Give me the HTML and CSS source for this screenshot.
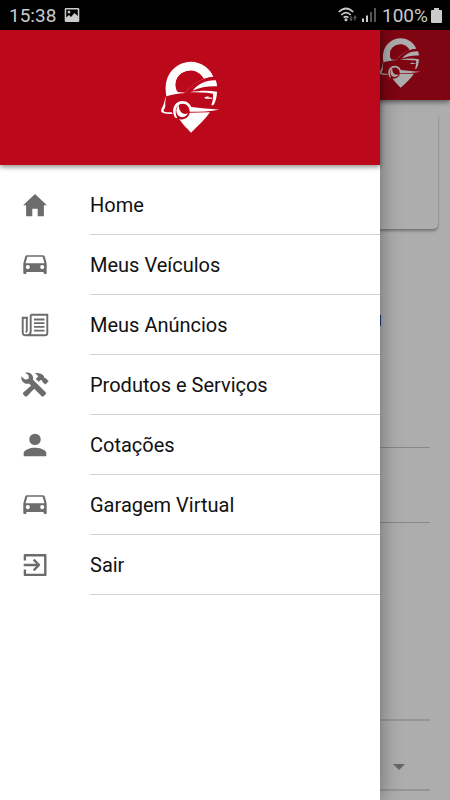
FILE: index.html
```html
<!DOCTYPE html>
<html lang="pt-BR">
<head>
    <meta charset="UTF-8">
    <meta name="viewport" content="width=device-width, initial-scale=1.0">
    <title>Menu</title>
    <link rel="stylesheet" href="styles.css">
</head>

<body>
    <!-- Shared icons -->
    <svg class="sprite">
        <symbol id="logo" viewBox="0 0 240 270">
            <path d="M49 139C46 120 46 106 49 95C56 60 88 35 122 35C154 35 179 54 190 80C172 82 154 89 134 104L112 125C102 130 98 130 104 129C82 131 64 134 49 139ZM84 126L104 125C114 113 138 93 160 86C150 69 138 62 122 62C94 62 77 82 77 104C77 113 79 120 84 126Z" fill-rule="evenodd"/>
            <path class="gap" d="M84 126L106 128C118 110 140 94 162 86C150 69 138 62 122 62C94 62 77 82 77 104C77 113 79 120 84 126Z"/>
            <path class="gap" d="M104 130C126 101 154 82 196 80L198 86C168 88 146 100 126 124L118 131Z"/>
            <path d="M128 122C144 102 168 90 197 91C200 97 201 103 201 109C174 108 150 112 128 122Z"/>
            <path d="M118 127C148 122 174 121 201 125C201 140 197 155 190 166L184 166C188 155 190 143 189 131C165 127 142 128 118 127Z"/>
            <path d="M163 142L176 139L175 142L187 143L186 146L166 146Z"/>
            <path d="M49 137C44 148 43 157 40 166C36 174 31 180 35 187C42 192 56 192 68 192L65 187C54 187 45 187 40 183C42 178 47 172 46 166C45 157 47 148 49 137Z"/>
            <path d="M76 203C62 183 72 153 97 153C112 153 120 162 124 171C150 175 180 176 208 179C180 184 150 185 119 185C119 171 110 161 98 161C80 161 71 181 82 205Z"/>
            <path d="M87 164C77 173 76 190 87 198C96 205 110 201 114 190C99 197 85 183 87 164Z"/>
            <path d="M119 188L180 187C166 208 146 226 123 248C110 235 98 223 88 208C102 210 117 203 119 188Z"/>
        </symbol>
        <symbol id="car" viewBox="0 0 30 30">
            <path d="M7.2 5.2H22.8Q24.3 5.2 24.8 6.6L26.7 13.5V23Q26.7 24 25.7 24H24.6Q23.6 24 23.6 23V22H6.4V23Q6.4 24 5.4 24H4.3Q3.3 24 3.3 23V13.5L5.2 6.6Q5.7 5.2 7.2 5.2ZM7.4 6.8L5.5 13.3H24.5L22.6 6.8ZM7.8 15A2.1 2.1 0 1 0 7.8 19.2A2.1 2.1 0 1 0 7.8 15ZM22.2 15A2.1 2.1 0 1 0 22.2 19.2A2.1 2.1 0 1 0 22.2 15Z" fill-rule="evenodd"/>
        </symbol>
    </svg>

    <div class="status-bar">
        <span class="time">15:38</span>
        <svg class="picture" viewBox="0 0 16 16"><path d="M2 1H14Q15.300 1 15.300 2.300V13.700Q15.300 15 14 15H2Q.700 15 .700 13.700V2.300Q.700 1 2 1ZM2.200 2.500V10.500L5 8L7 10L10.500 6L13.800 9V2.500ZM5 3.700A1.400 1.400 0 1 1 5 6.500A1.400 1.400 0 1 1 5 3.700Z" fill-rule="evenodd"/></svg>
        <svg class="wifi" viewBox="0 0 20 16">
            <g class="waves"><path d="M.8 5Q8 -2 15.200 5"/><path d="M3.200 8Q8 3.300 12.800 8"/><path d="M5.600 10.700Q8 8.600 10.400 10.700"/></g>
            <circle cx="8" cy="12.700" r="1.500"/>
            <path class="arrows" d="M11 11.500H12.300V9H13.700V11.500H15L13 14.500ZM15 11L17 8L19 11H17.700V13.500H16.300V11Z"/>
        </svg>
        <svg class="signal" viewBox="0 0 14 14"><path d="M0 10.500H2V14H0ZM4 7.500H6V14H4Z"/><path class="weak" d="M8 4H10V14H8ZM12 0H14V14H12Z"/></svg>
        <span class="percent">100%</span>
        <svg class="battery" viewBox="0 0 11 15"><path d="M3 0H8V2H10Q11 2 11 3V14Q11 15 10 15H1Q0 15 0 14V3Q0 2 1 2H3Z"/></svg>
    </div>

    <div class="screen">
        <!-- Page under the menu -->
        <div class="page">
            <div class="page-header"><svg class="page-logo"><use href="#logo"/></svg></div>
            <div class="card"></div>
            <div class="page-title">Bem-vindo u</div>
            <div class="field first"></div>
            <div class="field second"></div>
            <div class="field third"></div>
            <div class="field select"><span class="arrow"></span></div>
        </div>
        <div class="backdrop"></div>

        <div class="menu">
            <div class="menu-header"><svg class="menu-logo"><use href="#logo"/></svg></div>
            <ul class="menu-list">
                <li>
                    <svg class="icon" viewBox="0 0 30 30"><path d="M12.300 26.300V18.800H17.700V26.300H23.900V15.200H26.900L15 4.100L3.100 15.200H6.100V26.300Z"/></svg>
                    <span>Home</span>
                </li>
                <li>
                    <svg class="icon"><use href="#car"/></svg>
                    <span>Meus Veículos</span>
                </li>
                <li>
                    <svg class="icon" viewBox="0 0 30 30">
                        <g class="line"><path d="M10.700 4.700H27.300V23Q27.300 25.300 25 25.300H5.700Q2.700 25.300 2.700 22.300V7.700H8M10.700 4.700V21.500Q10.700 25 7.500 25"/><path d="M6.800 8V20.500Q6.800 22 5.500 22"/></g>
                        <path d="M14 8.500H24.500V10.500H14ZM14 12.200H24.500V14H14ZM14 16H24.500V17.800H14ZM14 19.800H24.500V21.600H14Z"/>
                    </svg>
                    <span>Meus Anúncios</span>
                </li>
                <li>
                    <svg class="icon" viewBox="0 0 30 30">
                        <path d="M1.200 6.500L5.500 9.800L8.800 8.500L8.500 5.300L5.200 2.800C9 1.600 14.200 4.300 13 9.800L25.700 22.300Q26.500 23.300 25.700 24.200L23.700 26.300Q22.700 27 21.700 26.200L9 13.500C5 15 .7 11.200 1.200 6.500Z"/>
                        <path d="M14.800 3.300C18 2.300 21.500 3.400 23.500 5.500L24.400 7.800L26 8.400L28.700 11.200L25.300 14.600L22.500 11.900L22 10.200L20.500 10.100L18.700 11.800L15.800 9L18.200 6.500Q17 4.200 14.800 3.300ZM11.500 15.200L14.700 18.200L7 26.200Q6 27 5 26.200L3.300 24.500Q2.500 23.500 3.300 22.600Z"/>
                    </svg>
                    <span>Produtos e Serviços</span>
                </li>
                <li>
                    <svg class="icon" viewBox="0 0 30 30"><circle cx="15" cy="9.400" r="5.700"/><path d="M3.700 26.200V23.300C3.700 19.500 10.500 17.700 15 17.700S26.300 19.500 26.300 23.300V26.200Z"/></svg>
                    <span>Cotações</span>
                </li>
                <li>
                    <svg class="icon"><use href="#car"/></svg>
                    <span>Garagem Virtual</span>
                </li>
                <li>
                    <svg class="icon" viewBox="0 0 30 30"><g class="line exit"><path d="M4.900 10.500V5.200H25.300V24.900H4.900V19.500"/><path d="M3.700 15H18.500M13.700 9.700L19 15L13.700 20.300"/></g></svg>
                    <span>Sair</span>
                </li>
            </ul>
        </div>
    </div>
</body>
</html>
```

FILE: styles.css
```css
* {
    box-sizing: border-box;
}

body {
    margin: 0;
    font-family: Roboto, sans-serif;
    background-color: #fff;
    color: #111;
}

svg {
    display: block;
    flex: none;
}

.sprite {
    position: absolute;
    width: 0;
    height: 0;
}

.gap {
    fill: #bc081b;
}

.status-bar {
    display: flex;
    align-items: center;
    height: 30px;
    padding: 0 8px 0 9px;
    background-color: #000;
    color: #cbcbcb;
    fill: #cbcbcb;
    font-size: 19px;
}

.time {
    width: 47px;
}

.picture {
    width: 16px;
    height: 16px;
    margin-left: 8px;
}

.wifi {
    width: 20px;
    height: 16px;
    margin-left: auto;
}

.waves {
    fill: none;
    stroke: #cbcbcb;
    stroke-width: 1.7;
}

.arrows,
.weak {
    fill: #555;
}

.signal {
    width: 14px;
    height: 14px;
    margin: 0 6px 0 4px;
}

.percent {
    width: 47px;
}

.battery {
    width: 11px;
    height: 15px;
    margin-left: 2px;
}

.screen {
    position: relative;
    height: 770px;
    overflow: hidden;
}

/* Page under the menu */
.page {
    height: 770px;
    background-color: #fff;
}

.page-header {
    display: flex;
    justify-content: flex-end;
    height: 70px;
    padding-right: 22px;
    background-color: #bc081b;
    box-shadow: 0 2px 5px rgba(0, 0, 0, 0.5);
}

.page-logo {
    width: 56px;
    height: 63px;
    fill: #fff;
}

.card {
    height: 117px;
    margin: 12px 12px 0;
    border-radius: 5px;
    box-shadow: 0 2px 3px rgba(0, 0, 0, 0.35);
}

.page-title {
    width: 382px;
    margin-top: 78px;
    height: 24px;
    line-height: 24px;
    font-size: 20px;
    text-align: right;
}

.field {
    margin: 0 20px;
    border-bottom: 1px solid #c8c8c8;
}

.first {
    height: 117px;
}

.second {
    height: 75px;
}

.third {
    height: 198px;
    border-bottom-width: 2px;
    border-color: #dedede;
}

.select {
    display: flex;
    justify-content: flex-end;
    height: 70px;
    padding: 43px 25px 0 0;
    border-bottom-width: 2px;
    border-color: #dedede;
}

.arrow {
    width: 12px;
    height: 6px;
    background-color: #999;
    clip-path: polygon(0 0, 100% 0, 50% 100%);
}

.backdrop {
    position: absolute;
    inset: 0;
    background-color: rgba(0, 0, 0, 0.32);
}

/* Side menu */
.menu {
    position: absolute;
    top: 0;
    left: 0;
    width: 380px;
    height: 770px;
    background-color: #fff;
    box-shadow: 0 0 20px rgba(0, 0, 0, 0.4);
}

.menu-header {
    display: flex;
    justify-content: center;
    height: 135px;
    padding-top: 20px;
    background-color: #bc081b;
    box-shadow: 0 2px 5px rgba(0, 0, 0, 0.45);
}

.menu-logo {
    width: 80px;
    height: 90px;
    fill: #fff;
}

.menu-list {
    margin: 0;
    padding: 10px 0 0 20px;
    list-style: none;
}

.menu-list li {
    display: flex;
    align-items: center;
    height: 60px;
}

.menu-list span {
    flex: 1;
    height: 60px;
    margin-left: 40px;
    border-bottom: 1px solid #d2d2d2;
    font-size: 20px;
    line-height: 60px;
}

.icon {
    width: 30px;
    height: 30px;
    fill: #6c6c6c;
}

.line {
    fill: none;
    stroke: #6c6c6c;
    stroke-width: 1.9;
}

.exit {
    stroke-width: 2.4;
    stroke-linejoin: round;
}
```
